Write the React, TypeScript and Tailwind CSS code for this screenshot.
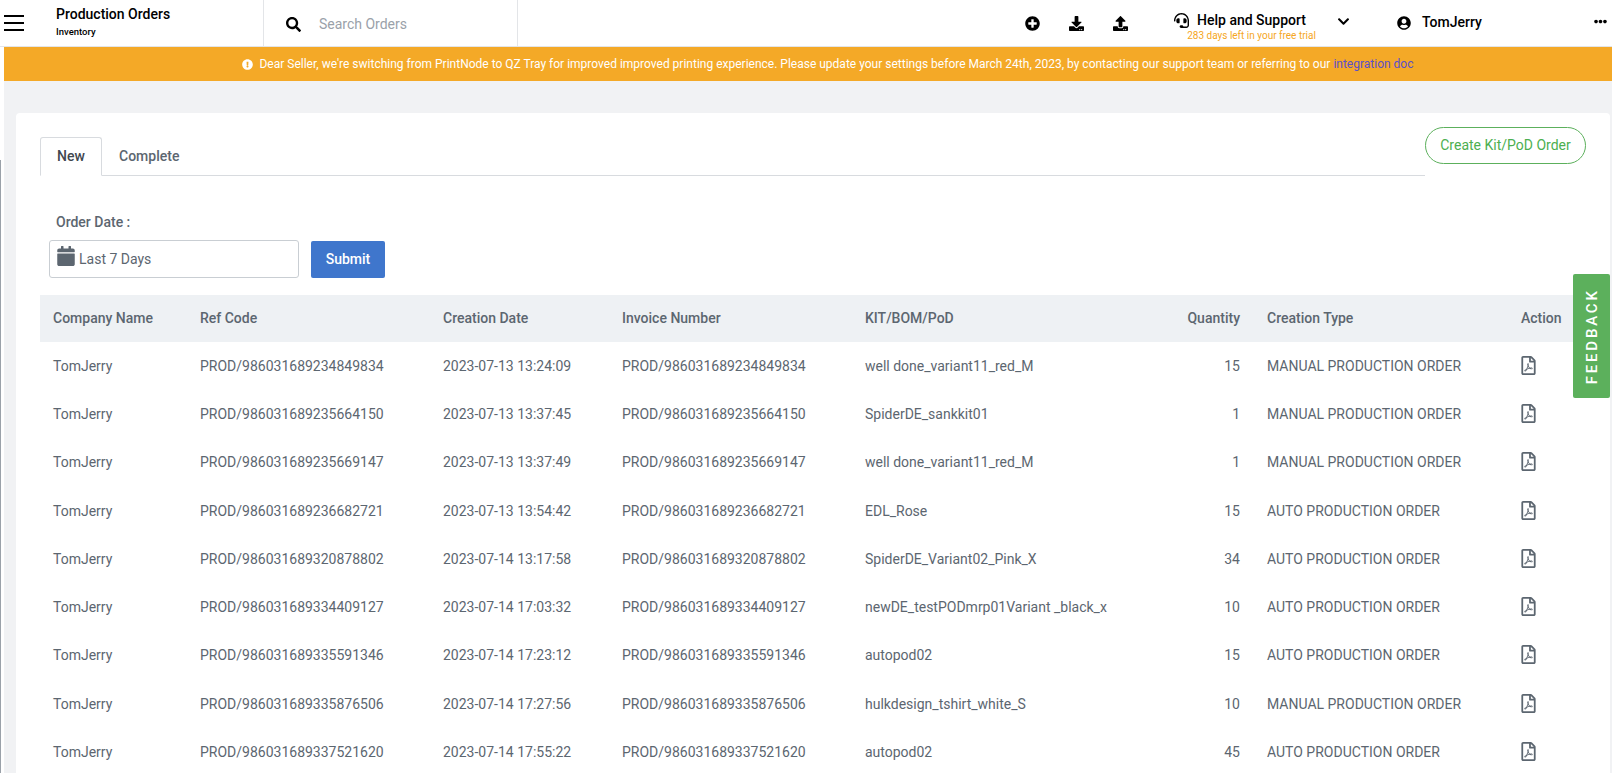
import React from "react";
import {
  FaCalendar,
  FaChevronDown,
  FaDownload,
  FaExclamationCircle,
  FaEllipsisH,
  FaHeadset,
  FaPlusCircle,
  FaRegFilePdf,
  FaSearch,
  FaUpload,
  FaUserCircle,
} from "react-icons/fa";

const orders = [
  ["PROD/986031689234849834", "2023-07-13 13:24:09", "well done_variant11_red_M", "15", "MANUAL PRODUCTION ORDER"],
  ["PROD/986031689235664150", "2023-07-13 13:37:45", "SpiderDE_sankkit01", "1", "MANUAL PRODUCTION ORDER"],
  ["PROD/986031689235669147", "2023-07-13 13:37:49", "well done_variant11_red_M", "1", "MANUAL PRODUCTION ORDER"],
  ["PROD/986031689236682721", "2023-07-13 13:54:42", "EDL_Rose", "15", "AUTO PRODUCTION ORDER"],
  ["PROD/986031689320878802", "2023-07-14 13:17:58", "SpiderDE_Variant02_Pink_X", "34", "AUTO PRODUCTION ORDER"],
  ["PROD/986031689334409127", "2023-07-14 17:03:32", "newDE_testPODmrp01Variant _black_x", "10", "AUTO PRODUCTION ORDER"],
  ["PROD/986031689335591346", "2023-07-14 17:23:12", "autopod02", "15", "AUTO PRODUCTION ORDER"],
  ["PROD/986031689335876506", "2023-07-14 17:27:56", "hulkdesign_tshirt_white_S", "10", "MANUAL PRODUCTION ORDER"],
  ["PROD/986031689337521620", "2023-07-14 17:55:22", "autopod02", "45", "AUTO PRODUCTION ORDER"],
];

const Header = () => (
  <header className="flex h-[47px] shrink-0 items-stretch border-b border-[#e3e5e8] bg-white text-black">
    <div className="flex w-[56px] items-center pl-[4px]">
      <div className="flex w-[20px] flex-col gap-[5px]">
        <span className="h-[2px] bg-black" />
        <span className="h-[2px] bg-black" />
        <span className="h-[2px] bg-black" />
      </div>
    </div>
    <div className="w-[207px] pt-[5px]">
      <div className="text-[14px] font-medium leading-[18px]">Production Orders</div>
      <div className="mt-[3px] text-[9.5px] font-medium leading-[12px]">Inventory</div>
    </div>
    <div className="flex w-[255px] items-center gap-[18px] border-x border-[#e3e5e8] pl-[22px] pt-[2px]">
      <FaSearch className="text-[15px]" />
      <span className="text-[14px] text-[#9aa1a9]">Search Orders</span>
    </div>
    <div className="flex w-[610px] items-center justify-end gap-[29px] text-[15px]">
      <FaPlusCircle />
      <FaDownload />
      <FaUpload />
    </div>
    <div className="ml-[51px] flex w-[145px] flex-col items-center pt-[10px]">
      <div className="flex items-center gap-[8px] whitespace-nowrap pr-[23px] text-[14px] font-medium leading-[20px]">
        <FaHeadset className="text-[15px]" />
        Help and Support
      </div>
      <div className="whitespace-nowrap text-[10px] leading-[11px] text-[#f5a623]">283 days left in your free trial</div>
    </div>
    <div className="ml-[13px] flex items-center pb-[3px] text-[14px]">
      <FaChevronDown className="text-[13px]" />
    </div>
    <div className="ml-[47px] flex items-center gap-[11px] pb-[1px] text-[14px] font-medium">
      <FaUserCircle className="text-[14px]" />
      TomJerry
    </div>
    <div className="ml-auto flex items-center pr-[5px] pb-[3px] text-[13px]">
      <FaEllipsisH />
    </div>
  </header>
);

const Banner = () => (
  <div className="flex h-[34px] shrink-0 items-center justify-center gap-[6px] bg-[#f4a927] pl-[40px] text-[12px] text-white">
    <FaExclamationCircle className="text-[11px]" />
    <span>
      Dear Seller, we're switching from PrintNode to QZ Tray for improved improved printing experience. Please update
      your settings before March 24th, 2023, by contacting our support team or referring to our{" "}
      <span className="text-[#5b50c9]">integration doc</span>
    </span>
  </div>
);

const OrdersTable = () => (
  <table className="w-[1534px] table-fixed border-collapse text-left text-[14px] text-[#5c6670]">
    <colgroup>
      <col className="w-[160px]" />
      <col className="w-[243px]" />
      <col className="w-[179px]" />
      <col className="w-[243px]" />
      <col className="w-[303px]" />
      <col className="w-[72px]" />
      <col className="w-[281px]" />
      <col className="w-[53px]" />
    </colgroup>
    <thead className="bg-[#eef1f4] font-medium">
      <tr className="h-[47px]">
        <th className="pl-[13px] font-medium">Company Name</th>
        <th className="font-medium">Ref Code</th>
        <th className="font-medium">Creation Date</th>
        <th className="font-medium">Invoice Number</th>
        <th className="font-medium">KIT/BOM/PoD</th>
        <th className="text-right font-medium">Quantity</th>
        <th className="pl-[27px] font-medium">Creation Type</th>
        <th className="font-medium">Action</th>
      </tr>
    </thead>
    <tbody>
      {orders.map((o) => (
        <tr key={o[0]} className="h-[48.3px]">
          <td className="pl-[13px]">TomJerry</td>
          <td>{o[0]}</td>
          <td>{o[1]}</td>
          <td>{o[0]}</td>
          <td>{o[2]}</td>
          <td className="text-right">{o[3]}</td>
          <td className="pl-[27px]">{o[4]}</td>
          <td>
            <FaRegFilePdf className="-ml-[2px] -mt-[2px] text-[19px]" />
          </td>
        </tr>
      ))}
    </tbody>
  </table>
);

export default function App() {
  return (
    <div className="relative flex h-screen w-full flex-col overflow-hidden bg-white font-['Roboto',sans-serif]">
      <Header />
      <span className="absolute left-0 top-[160px] h-[613px] w-[1px] bg-[#9aa1a9]" />
      <div className="ml-[4px] flex flex-1 flex-col bg-[#f1f2f4]">
        <Banner />
        <main className="ml-[12px] mr-[2px] mt-[32px] flex-1 rounded-t-[4px] bg-white pl-[24px]">
          <div className="flex items-start justify-between pr-[24px]">
            <div className="mt-[24px] flex h-[39px] flex-1 items-end border-b border-[#d8dbdf]">
              <div className="-mb-px flex h-[39px] w-[62px] items-center justify-center rounded-t-[3px] border border-b-white border-[#d8dbdf] bg-white text-[14px] font-medium text-[#3f474f]">
                New
              </div>
              <div className="flex h-[38px] items-center pl-[17px] text-[14px] font-medium text-[#5c6670]">Complete</div>
            </div>
            <button className="mt-[14px] h-[37px] w-[161px] rounded-full border border-[#5cb05c] text-[14px] text-[#4caf50]">
              Create Kit/PoD Order
            </button>
          </div>
          <div className="pl-[16px] pt-[37px] text-[14px] font-medium leading-[18px] text-[#5c6670]">Order Date :</div>
          <div className="mt-[9px] flex items-center gap-[12px] pl-[9px]">
            <div className="flex h-[38px] w-[250px] items-center gap-[3px] rounded-[3px] border border-[#c9ced3] pl-[6px] text-[14px] text-[#5c6670]">
              <FaCalendar className="-mt-[6px] text-[20px]" />
              Last 7 Days
            </div>
            <button className="h-[37px] w-[74px] rounded-[2px] bg-[#3f76cc] text-[14px] font-medium text-white">Submit</button>
          </div>
          <div className="mt-[17px]">
            <OrdersTable />
          </div>
        </main>
      </div>
      <div className="absolute left-[1573px] top-[274px] flex h-[124px] w-[37px] items-center justify-center rounded-[2px] bg-[#5cb05c]">
        <span className="-rotate-90 whitespace-nowrap text-[15px] font-medium tracking-[2.8px] text-white">FEEDBACK</span>
      </div>
    </div>
  );
}
